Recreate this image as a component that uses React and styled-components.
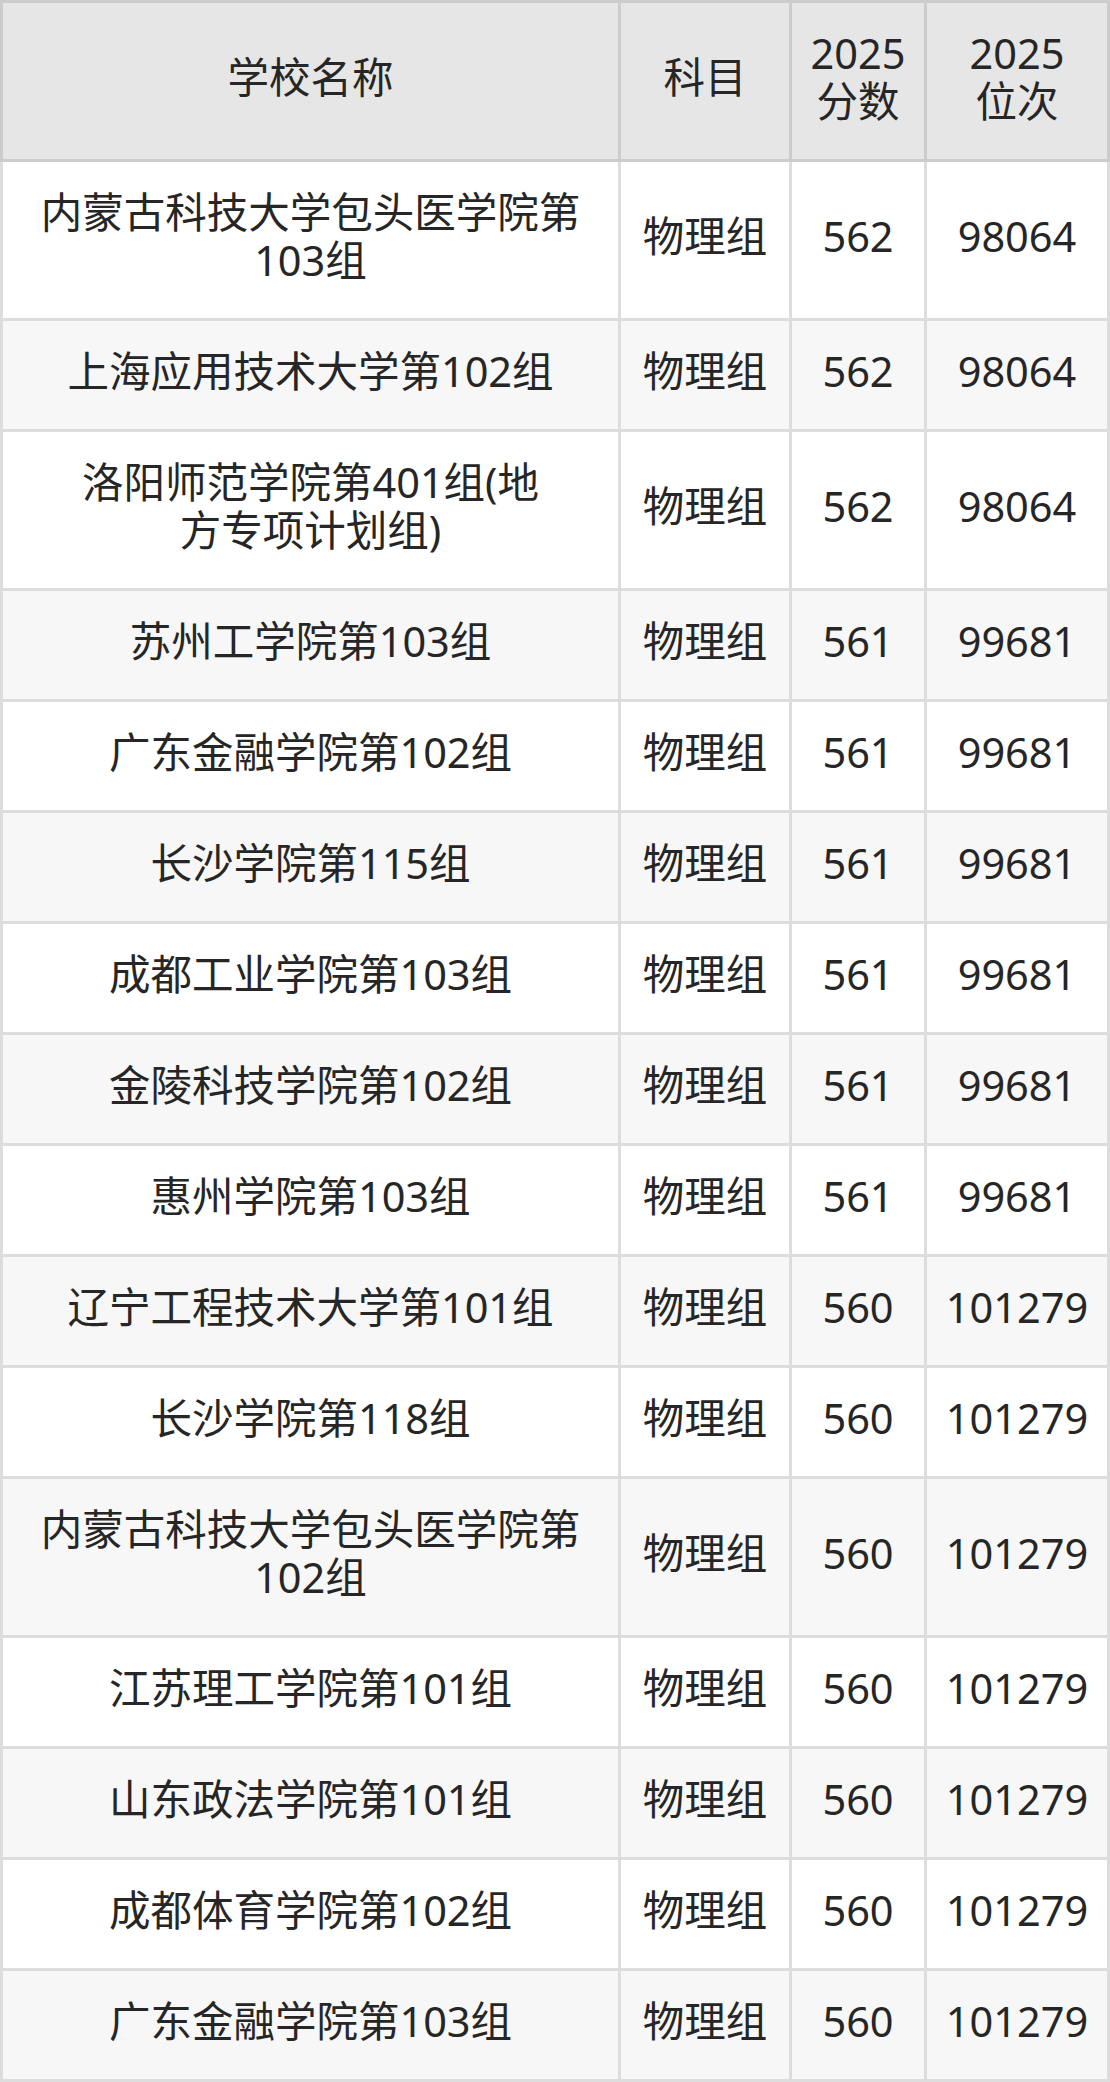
import React from 'react'
import styled, { createGlobalStyle } from 'styled-components'

const GlobalStyle = createGlobalStyle`
  html, body {
    margin: 0;
    padding: 0;
    background: #fff;
  }
  body {
    font-family: "Noto Sans", "Noto Sans CJK SC", sans-serif;
    color: #262626;
  }
`;

const COLUMNS = '615px 168px 132px 180px';

const Table = styled.div`
  width: 1110px;
  display: flex;
  flex-direction: column;
`;

const HeadRow = styled.div`
  display: grid;
  grid-template-columns: ${COLUMNS};
  gap: 3px;
  padding: 3px;
  background: #cccccc;
`;

const Body = styled.div`
  display: grid;
  gap: 3px;
  padding: 0 3px 3px;
  background: #dddddd;
`;

const Row = styled.div`
  display: grid;
  grid-template-columns: ${COLUMNS};
  gap: 3px;
`;

const Cell = styled.div`
  display: flex;
  align-items: center;
  justify-content: center;
  text-align: center;
  white-space: pre-line;
  padding: 26px ${(p) => (p.$wide ? '20px' : '6px')} 34px;
  font-size: 41.5px;
  line-height: 48px;
  background: ${(p) => (p.$head ? '#e6e6e6' : p.$striped ? '#f7f7f7' : '#ffffff')};
`;

const headers = ['学校名称', '科目', '2025\n分数', '2025\n位次'];

const rows = [
  ['内蒙古科技大学包头医学院第\n103组', '物理组', '562', '98064'],
  ['上海应用技术大学第102组', '物理组', '562', '98064'],
  ['洛阳师范学院第401组(地\n方专项计划组)', '物理组', '562', '98064'],
  ['苏州工学院第103组', '物理组', '561', '99681'],
  ['广东金融学院第102组', '物理组', '561', '99681'],
  ['长沙学院第115组', '物理组', '561', '99681'],
  ['成都工业学院第103组', '物理组', '561', '99681'],
  ['金陵科技学院第102组', '物理组', '561', '99681'],
  ['惠州学院第103组', '物理组', '561', '99681'],
  ['辽宁工程技术大学第101组', '物理组', '560', '101279'],
  ['长沙学院第118组', '物理组', '560', '101279'],
  ['内蒙古科技大学包头医学院第\n102组', '物理组', '560', '101279'],
  ['江苏理工学院第101组', '物理组', '560', '101279'],
  ['山东政法学院第101组', '物理组', '560', '101279'],
  ['成都体育学院第102组', '物理组', '560', '101279'],
  ['广东金融学院第103组', '物理组', '560', '101279'],
];

export default function App() {
  return (
    <>
      <GlobalStyle />
      <Table>
        <HeadRow>
          {headers.map((h, i) => (
            <Cell key={h} $head $wide={i === 0}>
              {h}
            </Cell>
          ))}
        </HeadRow>
        <Body>
          {rows.map((row, r) => (
            <Row key={r}>
              {row.map((text, c) => (
                <Cell key={c} $wide={c === 0} $striped={r % 2 === 1}>
                  {text}
                </Cell>
              ))}
            </Row>
          ))}
        </Body>
      </Table>
    </>
  );
}
